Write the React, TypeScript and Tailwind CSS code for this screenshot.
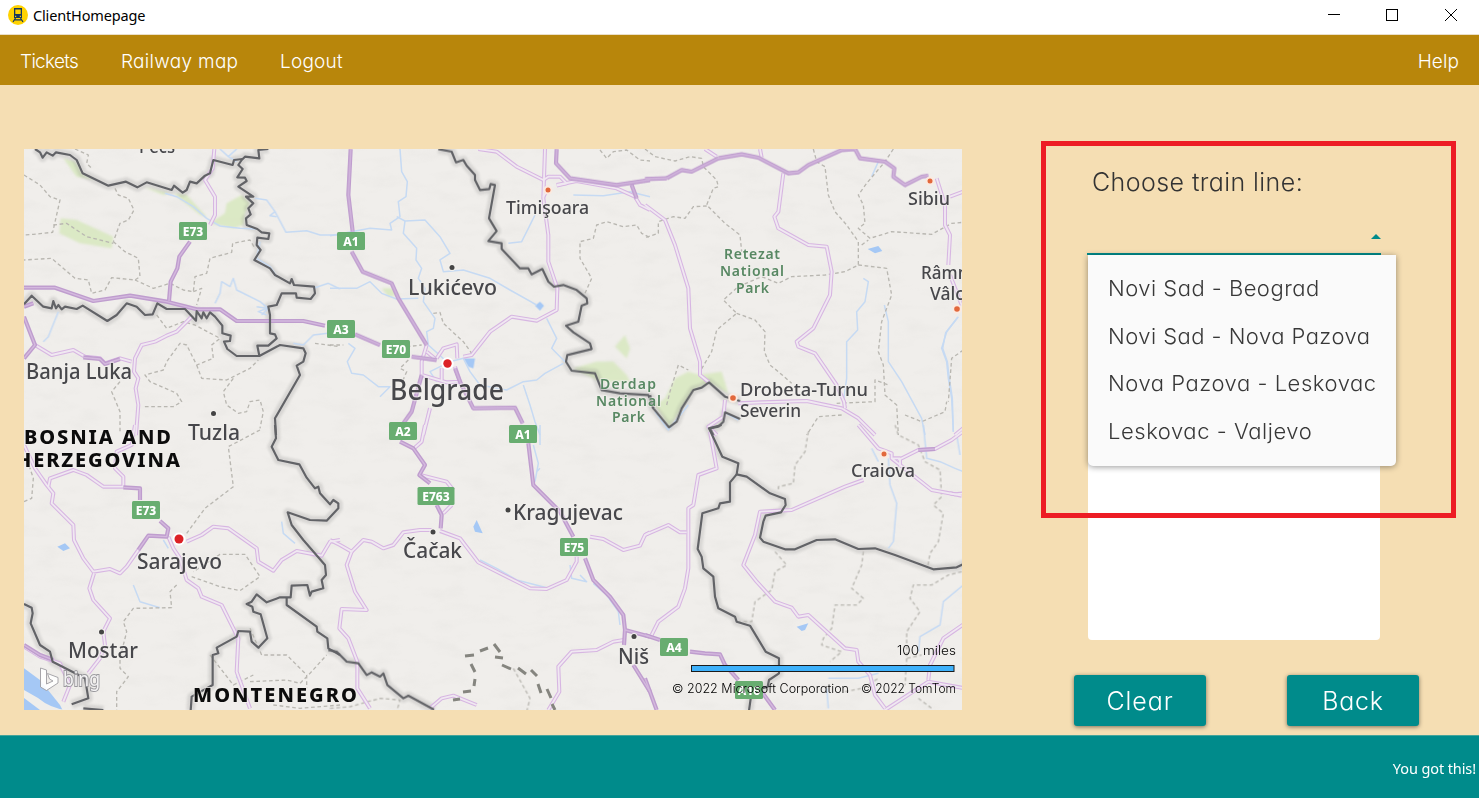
import React from "react";

type Tile = {
  x: number;
  y: number;
  parks?: string[];
  water?: string[];
  rivers?: string[];
  dashes?: string[];
  minor?: string[];
  major?: string[];
  borders?: string[];
};

// Every tile is drawn on a grid three times finer than the map's own pixels.
const tiles: Tile[] = [
  {
    x: 20,
    y: 145,
    parks: [
      "M122 220 L170 225 280 275 275 310 180 295 118 265Z",
      "M130 40 L165 50 190 90 230 105 170 95Z",
      "M620 175 L665 150 690 175 675 205 670 240 640 250 570 235 615 205Z",
      "M460 145 L500 150 560 215 540 210Z",
      "M370 125 L450 145 430 150Z",
    ],
    rivers: [
      "M435 145 L470 155 520 185 560 220 600 243 660 250 710 252",
      "M600 12 L625 35 650 12 M625 35 L650 50",
      "M705 160 L740 165 765 200 798 262 860 257 900 270 960 270",
      "M765 200 L750 212 770 215",
      "M585 475 L600 445 605 410 630 425 640 400 650 435 720 470 745 490 725 510",
      "M115 500 L95 550 85 575 70 590",
      "M720 290 L710 340 750 365 770 395 M880 430 L925 415 960 432",
      "M960 560 L880 570 850 600 820 595",
      "M710 485 L740 490 715 500 740 510",
    ],
    dashes: [
      "M12 90 L60 120 90 155 120 165 98 262 40 268 12 270",
      "M100 240 L140 235 200 275 280 295",
      "M285 130 L295 150 325 160 342 195 325 225 300 235 280 290",
      "M280 290 L315 320 355 340 360 395 345 405 275 398 255 435 215 445 205 405 165 400 95 340 12 345",
      "M345 405 L400 430 450 415 490 435 520 440 525 395 560 385 570 340 635 322 638 295 690 285 705 310",
      "M410 510 L440 550 490 530 525 540 600 580 575 600 580 640 530 660 500 600 480 595 440 650 430 675 375 690 390 710 470 745 485 770 460 785 370 785",
      "M530 660 L545 700 620 705 690 670 715 645",
      "M640 700 L610 740 620 780 655 805 680 800 690 770 720 765 730 800 720 850",
      "M165 12 L205 30 200 55 215 70",
      "M300 710 L275 740 300 800 300 860",
      "M885 595 L960 605 M520 440 L545 430 530 480",
    ],
    minor: [
      "M583 12 L578 70 555 105 585 155 585 210 570 240",
      "M45 600 L95 630 160 615 195 635 240 640 255 655 300 640 335 650",
      "M515 515 L470 560 440 572 405 590 365 600 345 640 342 680 355 700 347 730 355 780 348 870",
    ],
    major: [
      "M12 428 L105 428 220 468 330 452 440 470 530 493 600 493 650 528 850 528 915 542",
      "M510 290 L478 335 472 370 452 410 447 468",
      "M12 515 L45 600 12 640",
      "M190 637 L240 642 255 657 300 642",
      "M12 485 L40 475",
    ],
    borders: [
      "M45 12 L60 22 68 38 80 22 98 32 108 22 150 30 170 45 188 85 265 122 318 110 352 127 380 112 455 135 462 122 488 143 500 135 510 110 530 115 555 92 570 85 580 45 638 60 642 45 668 42",
      "M745 12 L715 15 718 40 675 35 665 45 655 60 668 72 652 97 675 98 680 108 655 125 700 155 678 155 700 175 685 190 692 208 678 220 680 240 712 252 725 262 748 265 745 282 712 278 710 300 722 315 703 345 750 370 765 390 810 415 815 402 822 420 882 425 885 445 872 462 830 458 828 445 785 445 770 480 745 485 750 510 750 565 765 568 770 580 745 602 712 602 718 632",
      "M12 478 L35 452 70 485 95 490 100 468 108 490 115 480 125 493 135 485 170 492 188 482 262 528 290 510 320 475 350 485 375 510 398 508 412 475 440 492 495 492 528 527 530 498 545 520 550 502 560 520 570 502 585 515 607 542 607 565 632 572 630 588 612 590 622 612 650 633 718 633 780 600 850 610 857 625 850 650 830 662 840 690 765 820 768 870",
    ],
  },
  {
    x: 330,
    y: 145,
    parks: [
      "M730 670 L800 650 850 650 890 690 900 710 810 710Z",
      "M855 605 L885 570 900 610 890 640Z",
      "M155 430 L190 430 210 450 175 455Z",
    ],
    water: ["M615 482 L630 470 642 482 630 497Z", "M400 640 L435 640 430 670 415 665Z"],
    rivers: [
      "M210 12 L215 80 232 110 228 155 205 170 210 215 180 235 185 255 120 250 0 272",
      "M200 215 L225 228 285 225 330 275 360 325 330 345 340 380 400 375 480 400 540 435 620 480",
      "M225 228 L220 265 260 310 258 345 275 370 265 400 285 430 280 470 315 520 310 550 290 560 295 600 350 650",
      "M0 430 L80 430 120 410 155 445 200 462 265 460",
      "M55 595 L75 610 52 650 65 685 100 690 145 725 180 725 150 755",
      "M360 650 L400 640 420 680 450 720 530 735 580 710 620 705 645 685 700 655",
      "M650 520 L680 580 665 610 705 650",
      "M580 720 L600 780 615 830 630 870",
      "M615 210 L595 250 575 290 535 295 M960 155 L900 140 820 152 730 150",
      "M350 655 L300 680 320 710",
    ],
    dashes: [
      "M310 505 L330 502 340 535 400 590 425 625",
      "M230 605 L275 600 M235 645 L210 670 230 680 215 715",
      "M765 445 L785 400 750 340 750 290 790 280 800 240 830 230 880 245 920 240 935 265 960 278",
      "M810 15 L830 40 850 20 890 15 930 45 960 48",
      "M0 600 L40 600",
    ],
    minor: [
      "M400 635 L425 630 480 560 545 515 620 527 680 495 682 430 655 350 655 270 640 160 645 12",
      "M445 12 L500 20 560 65 640 105 655 95 690 95 710 115 680 122 M655 130 L640 155",
      "M680 120 L740 108 860 130 915 155 930 180 960 195",
      "M290 600 L275 650 275 690 350 712 390 710 375 665",
      "M320 640 L340 610 380 598 382 640",
      "M300 790 L280 870 M335 670 L335 705 M290 620 L320 645",
    ],
    major: [
      "M62 12 L55 150 68 260",
      "M65 320 L98 380 185 415 205 460 290 600",
      "M75 568 L150 600",
      "M245 635 L320 645",
      "M275 690 L245 800 220 835",
      "M375 670 L390 710 430 790 555 788 578 835",
      "M680 12 L678 55 720 100 860 120 960 105 M905 120 L920 160",
    ],
    borders: [
      "M325 12 L365 20 378 52 400 45 410 62 435 90 435 105 450 135 478 132 482 117 495 120 477 220 500 258 475 288 515 295 515 312 570 370 595 370 605 388 637 372 655 410 672 425 700 420 740 435 770 460 772 475 755 482 745 530 708 542 730 562 780 595 785 612 712 630 708 650 725 677 795 685 815 735 870 745 955 750 970 790",
    ],
  },
  {
    x: 645,
    y: 145,
    parks: ["M30 780 L60 760 90 700 130 680 165 690 230 680 250 745 192 712 145 735 110 790 72 847Z"],
    water: ["M668 312 L700 303 712 318 690 325Z"],
    rivers: [
      "M655 400 L670 410 660 470 635 500 638 555 605 590 605 700 595 770",
      "M718 480 L730 530 730 650 770 710 830 820 840 870",
      "M235 800 L280 825 M30 800 L70 855 130 780",
      "M700 50 L680 95",
      "M940 515 L905 560 890 610 905 650 910 700 920 760 925 860",
      "M937 518 L902 563 893 610 907 650 913 700 922 760 925 860",
    ],
    dashes: [
      "M0 12 L30 35 90 48 135 35 170 40 175 65 215 105 220 125 205 130 185 180 240 235 285 270 290 320",
      "M185 183 L145 185 120 220 85 215 40 230 40 265 0 278",
      "M505 12 L515 50 540 65 550 150 570 200 605 240 640 290 640 360 600 380 540 390 440 395 400 415 350 395 280 425 235 465 275 505 215 555 200 620 165 680",
      "M275 505 L330 525 360 560 358 620 375 660 400 680 440 715",
      "M745 12 L720 50 665 115 640 150 655 180 660 235 640 250 675 280 740 260 860 268 920 235 955 232",
      "M640 360 L725 370 740 450 710 530 700 620 715 660 720 750 755 780 760 870",
      "M575 775 L690 770 690 705 730 720 M780 810 L830 830 900 800 905 770",
      "M955 615 L920 640 910 770 M590 810 L520 815 485 870 M650 300 L670 285",
      "M65 780 L75 740 100 660 130 675",
    ],
    minor: [
      "M180 12 L215 35 M345 12 L350 38",
      "M415 85 L400 200 388 215 400 250 490 300 545 305 560 380 555 450 505 550 455 590 460 605 510 625 575 720 597 770 600 790",
      "M0 180 L60 225 90 300 130 430 135 550 165 650 165 690 192 712",
      "M875 100 L900 180 900 240 915 270 910 360 M915 155 L955 140 M915 390 L950 480",
      "M280 775 L350 772 485 768 590 790 640 820 690 870",
      "M240 765 L235 815 190 845 215 870",
      "M930 870 L960 845",
    ],
    major: [
      "M0 102 L65 100 M220 40 L290 28 340 38 430 85 460 82 490 60 590 15 630 12 645 40 720 50 748 70 745 95 780 120 830 95 850 92",
      "M65 100 L110 75 140 80 220 40",
    ],
    borders: [
      "M15 750 L25 790 72 847 95 830 110 790 145 735 170 728 192 712 240 755 285 768",
      "M285 822 L240 802 235 830 220 845 195 850 205 870",
    ],
  },
  {
    x: 20,
    y: 425,
    water: [
      "M12 730 L60 765 120 840 130 860 12 860Z",
      "M112 365 L135 355 150 370 130 378Z",
    ],
    rivers: [
      "M785 290 L790 325 825 355 M340 480 L360 530 420 548",
      "M650 670 L650 760 M430 345 L445 370",
    ],
    dashes: [
      "M720 15 L625 65 640 185 555 250 500 325",
      "M470 480 L450 500 455 548 340 550 310 590 320 620 300 700 300 730 325 755 290 800 290 860",
      "M12 230 L35 220 40 160 20 100",
      "M515 455 L600 485 660 497 720 455 675 388 600 388 520 440",
      "M690 610 L725 690 800 690 860 750 860 790 M690 770 L800 765 840 775 870 745 920 690 M570 690 L640 780 700 750",
      "M760 840 L840 850 960 840",
    ],
    minor: [
      "M345 0 L335 60 290 80 285 130 310 155 310 185",
      "M12 60 L45 130 80 180 100 205 95 235 160 300 162 345 190 400 220 440 270 432 300 445 320 425 355 375",
      "M85 185 L90 160 160 135 200 150 250 185 310 185",
      "M222 445 L208 490 220 525 270 580 250 620 255 660 240 700 205 745",
      "M445 335 L460 370 480 400 500 465 535 490 545 515 605 540 640 610 655 640 650 740 690 850",
      "M500 350 L545 330 580 305 625 310 710 370 715 410 760 437 785 405 830 378 905 392 930 350 960 345",
      "M12 665 L60 695 120 715 150 780 130 830",
    ],
    major: ["M310 187 L360 190 360 225", "M355 375 L385 332 440 335 445 310 420 288", "M12 660 L60 690 100 705"],
    borders: [
      "M765 0 L768 40 755 65 775 105 838 118 860 158 885 190 895 185 900 205 930 238 940 225 955 235 955 250 920 287 870 285 803 262 815 300 850 345 915 420 918 450 905 465 910 490 875 500 870 512 862 480 815 482 812 517 780 517 740 532 710 508 695 530 680 537 697 545 700 560 722 568 742 640 715 668 695 650 690 620 655 618 650 635 590 668 595 685 578 690 578 780 515 815 512 857",
      "M800 518 L800 540 890 605 892 620 922 640 925 670 960 690",
      "M12 537 L35 548 38 565 32 595 60 660 90 680 98 710 195 760 200 790 205 820 155 838",
      "M190 850 L250 855",
    ],
  },
  {
    x: 330,
    y: 425,
    water: ["M430 305 L440 285 458 325 435 320Z"],
    rivers: [
      "M610 60 L625 115 615 170 M630 130 L620 140 M630 0 L630 60",
      "M450 405 L500 430 560 465 650 488",
      "M720 420 L725 460 770 470 750 450 M790 475 L830 510 865 560 870 600",
    ],
    dashes: ["M550 730 L600 820 590 860", "M0 850 L60 845 150 820 210 825 200 860"],
    minor: [
      "M0 345 L30 360 65 380 100 345 125 350 160 370 190 360 220 322 270 315 305 315",
      "M65 380 L50 420 75 500 110 555 35 552 28 610 55 640 82 710 82 790 120 850",
      "M330 318 L390 340 445 412 520 450 600 490 650 492 710 465 740 410 740 395",
      "M285 0 L275 50 250 72 M365 240 L340 265 M270 150 L350 170 370 195",
      "M780 335 L820 342 880 375 930 362 945 330 960 322",
      "M882 645 L850 650 800 675 725 680 685 725 688 800 655 855",
      "M300 850 L335 820 370 812 440 840",
    ],
    major: [
      "M210 50 L250 70 285 120 268 150 300 175",
      "M320 240 L335 270 332 310",
      "M595 55 L610 180 690 260 730 335",
      "M765 400 L790 465 840 515 880 570 885 615 960 635",
      "M885 615 L882 660 M910 720 L960 800",
    ],
    borders: ["M-5 675 L20 680 50 710 85 715 110 750 125 742 150 755 160 745 172 780 220 820 235 812 312 854"],
  },
  {
    x: 645,
    y: 425,
    water: ["M455 605 L490 595 480 615 470 618Z"],
    rivers: [
      "M730 100 L735 180 755 235 745 350 730 370",
      "M835 0 L845 100 885 110 930 130 955 140 M935 30 L945 90",
      "M955 480 L895 530 885 600 825 635 820 680",
      "M550 760 L640 760 700 745 M545 790 L550 850 M680 70 L700 110",
    ],
    dashes: [
      "M490 20 L480 80 450 120 445 175 400 185 400 200",
      "M750 0 L760 30 820 60 840 110 885 135 890 215 865 240 895 265 880 350 855 385 848 425",
      "M390 380 L425 420 390 440 380 495 330 530 320 590 280 590",
      "M655 380 L650 420 620 490 655 520 635 540 570 540 560 610 535 640 530 660 590 680 555 710",
      "M950 440 L910 450 860 480 805 480 795 520 825 560 785 620 785 700 830 690 M785 700 L780 780 M820 820 L860 850",
      "M600 800 L650 790 700 760",
    ],
    minor: [
      "M195 20 L215 130 160 150 145 240 130 250 130 430 120 490 100 545 40 590 20 630",
      "M640 0 L700 70 740 85 740 100 860 195 930 208 960 205",
      "M760 105 L820 75 870 72 920 45 960 15 M740 100 L765 100 765 125",
      "M655 165 L600 185 440 255 345 260 330 330 295 420 335 470 390 530 440 548 460 575 490 570 600 670 635 675 640 710 675 750 690 810 720 850",
      "M0 330 L70 300 105 322 125 322 M915 205 L950 212",
      "M850 765 L855 720 895 640 960 595",
      "M720 855 L850 770 960 790",
    ],
    major: [
      "M135 680 L180 685 225 688 240 720 280 765",
      "M0 760 L35 855 M350 800 L390 855 M0 630 L45 645",
      "M820 75 L870 72",
    ],
    borders: [
      "M230 0 L192 10 232 95 280 115 275 148 305 155 375 205 420 222 422 240 408 262 362 272 355 290 345 338 355 350 420 373 450 373 515 345 570 343 640 372 690 370 750 390 865 433 935 427 960 415",
      "M275 148 L255 172 255 230 225 235 220 250 172 265 158 372 170 395 175 430 205 455 210 515 220 550 270 575 275 590 315 602 362 680 402 700 402 745 372 765 368 785 320 800 312 857",
    ],
  },
];

type Layer = "parks" | "water" | "rivers" | "dashes" | "minor" | "major" | "borders";

function LayerPaths({ layer, ...style }: { layer: Layer } & React.SVGProps<SVGGElement>) {
  return (
    <g fill="none" strokeLinejoin="round" {...style}>
      {tiles.map((t, i) => (
        <g key={i} transform={`translate(${t.x} ${t.y}) scale(0.33333)`}>
          {(t[layer] ?? []).map((d, j) => (
            <path key={j} d={d} />
          ))}
        </g>
      ))}
    </g>
  );
}

// text, left, baseline, size, width
type Label = [string, number, number, number, number];

const cities: Label[] = [
  ["Banja Luka", 26, 379, 21, 106],
  ["Tuzla", 188, 439.5, 21, 52],
  ["Lukićevo", 408, 294.5, 21.5, 89],
  ["Timişoara", 506, 213.5, 18.5, 83],
  ["Sibiu", 908, 204.5, 18.5, 42],
  ["Drobeta-Turnu", 740, 396, 18.5, 128],
  ["Severin", 740, 417, 18.5, 61],
  ["Craiova", 851, 477, 18.5, 64],
  ["Kragujevac", 513, 520, 21.5, 110],
  ["Čačak", 403, 557.5, 21.5, 59],
  ["Niš", 618, 663.5, 22.5, 31],
  ["Sarajevo", 137, 569, 21.5, 85],
  ["Mostar", 68, 658, 21.5, 70],
];

const parkNames: Label[] = [
  ["Retezat", 724, 259, 14, 56],
  ["National", 720, 276, 14, 64],
  ["Park", 736, 293, 14, 33],
  ["Derdap", 600, 388.5, 14, 56],
  ["National", 596, 405.5, 14, 65],
  ["Park", 612, 422, 14, 33],
];

const shields: [string, number, number, number][] = [
  ["E73", 193, 231, 28],
  ["A1", 351, 241, 28],
  ["A3", 341, 329, 28],
  ["E70", 396, 349, 28],
  ["A2", 403, 431, 28],
  ["A1", 523, 434, 28],
  ["E763", 436, 496, 37],
  ["E73", 146, 510, 28],
  ["E75", 574, 547, 28],
  ["A4", 674, 647, 28],
  ["A16", 749, 690, 28],
];

function RailwayMap() {
  return (
    <svg
      viewBox="24 149 938 561"
      className="block h-[561px] w-[938px] font-['Noto_Sans','Open_Sans',sans-serif] font-normal"
      role="img"
      aria-label="Railway map"
    >
      <defs>
        <filter id="relief" x="0" y="0" width="100%" height="100%">
          <feTurbulence type="fractalNoise" baseFrequency="0.03 0.08" numOctaves="4" seed="8" />
          <feColorMatrix type="matrix" values="0 0 0 0 0.5  0 0 0 0 0.5  0 0 0 0 0.47  0.9 0 0 0 -0.42" />
        </filter>
        <filter id="soft">
          <feGaussianBlur stdDeviation="1.2" />
        </filter>
      </defs>
      <rect x="24" y="149" width="938" height="561" fill="#f0eeeb" />
      <rect x="24" y="149" width="938" height="561" filter="url(#relief)" opacity="0.2" />
      <LayerPaths layer="parks" fill="#d6e7bb" fillOpacity="0.8" filter="url(#soft)" />
      <LayerPaths layer="water" fill="#a5c8f5" />
      <path d="M24 690 L38 698 Q50 708 66 710 L40 710 24 698Z" fill="#f0eeea" />
      <g opacity="0.2" filter="url(#soft)">
        <LayerPaths layer="borders" stroke="#808080" strokeWidth="26" />
      </g>
      <LayerPaths layer="rivers" stroke="#c6daf3" strokeWidth="4.5" />
      <LayerPaths layer="dashes" stroke="#b9b7b1" strokeWidth="4" strokeDasharray="11 8" />
      <LayerPaths layer="minor" stroke="#d7b6e2" strokeWidth="12" />
      <LayerPaths layer="minor" stroke="#f0e8f1" strokeWidth="5.5" />
      <LayerPaths layer="major" stroke="#bf9dce" strokeWidth="12.5" />
      <LayerPaths layer="major" stroke="#d4b9de" strokeWidth="4" />
      <LayerPaths layer="borders" stroke="#626367" strokeWidth="6.5" />
      <path
        d="M465 656 L474 655 M480 651 L488 648 M494 644 L500 652 M495 657 L503 658 M502 665 L511 669 M518 668 L526 674 M531 670 L537 676 M538 684 L541 693 M547 689 L551 698 M552 704 L555 710 M471 664 L475 672 M475 679 L474 686 M463 692 L471 691 M453 700 L460 699"
        fill="none"
        stroke="#85857f"
        strokeWidth="3"
      />

      {/* City markers */}
      {[
        [548, 190, 2.5],
        [930, 181, 2.5],
        [733, 398, 2.8],
        [957, 309, 2.8],
        [884, 454, 2.5],
      ].map(([x, y, r]) => (
        <circle key={x} cx={x} cy={y} r={r} fill="#e2683c" stroke="#fbeae0" strokeWidth="4" paintOrder="stroke" />
      ))}
      <circle cx="447.500" cy="363.500" r="4.200" fill="#dc2226" stroke="#fff" strokeWidth="4" paintOrder="stroke" />
      <circle cx="179" cy="539" r="4.500" fill="#dc2226" stroke="#fff" strokeWidth="4" paintOrder="stroke" />
      {[
        [452, 267.5],
        [213.5, 413.5],
        [433, 532],
        [508, 510],
        [101.5, 632],
        [634, 636.5],
      ].map(([x, y]) => (
        <circle key={x} cx={x} cy={y} r="2.500" fill="#444" stroke="#f3f1ee" strokeWidth="2" paintOrder="stroke" />
      ))}

      {/* Road shields */}
      {shields.map(([name, cx, cy, w]) => (
        <g key={`${name}-${cx}`}>
          <rect x={cx - w / 2} y={cy - 9} width={w} height={18} rx="1.500" fill="#68ad70" />
          <text x={cx} y={cy + 4.5} fontSize="12" fontWeight="800" fill="#fff" textAnchor="middle">
            {name}
          </text>
        </g>
      ))}

      {/* Place names */}
      <g fill="#47474b" stroke="#f2f0ed" strokeOpacity="0.6" strokeWidth="2.500" paintOrder="stroke" strokeLinejoin="round">
        {cities.map(([t, x, y, s, w]) => (
          <text key={t} x={x} y={y} fontSize={s} textLength={w} lengthAdjust="spacingAndGlyphs" fontWeight="500">
            {t}
          </text>
        ))}
        <text x="390" y="399.500" fontSize="28" textLength="114" lengthAdjust="spacingAndGlyphs" fontWeight="500">
          Belgrade
        </text>
        <text x="139" y="152.500" fontSize="18" textLength="36" lengthAdjust="spacingAndGlyphs" fontWeight="500">
          Pecs
        </text>
        <text x="921" y="279" fontSize="18" fontWeight="500" textLength="71" lengthAdjust="spacingAndGlyphs">
          Râmnicu
        </text>
        <text x="930" y="300" fontSize="18" fontWeight="500" textLength="54" lengthAdjust="spacingAndGlyphs">
          Vâlcea
        </text>
      </g>
      <g fill="#588863" stroke="#f2f0ed" strokeOpacity="0.6" strokeWidth="2" paintOrder="stroke" fontWeight="600">
        {parkNames.map(([t, x, y, s, w]) => (
          <text key={`${t}-${x}`} x={x} y={y} fontSize={s} textLength={w}>
            {t}
          </text>
        ))}
      </g>
      <g fill="#0c0c0c" stroke="#f2f0ed" strokeOpacity="0.7" strokeWidth="2" paintOrder="stroke" fontWeight="800" fontSize="20">
        <text x="24" y="444" textLength="147">BOSNIA AND</text>
        <text x="16" y="467" textLength="164">HERZEGOVINA</text>
        <text x="193" y="702" textLength="164">MONTENEGRO</text>
      </g>

      {/* Bing mark */}
      <path
        d="M40.500 668 L46.500 670 V684 L53 681 L49.500 679 L47.500 673.500 L58 677.500 V683 L46.500 690.500 L40.500 687Z"
        fill="#fff"
        fillOpacity="0.9"
        stroke="#9d9ca0"
        strokeWidth="0.900"
      />
      <text
        x="63"
        y="686"
        fontSize="19"
        fill="#f4f3f4"
        stroke="#9b9a9e"
        strokeWidth="2"
        paintOrder="stroke"
        textLength="37"
        lengthAdjust="spacingAndGlyphs"
      >
        bing
      </text>

      {/* Scale bar and copyright */}
      <rect x="691.500" y="665.500" width="262.500" height="6" fill="#3eb1fb" stroke="#1b1b1b" />
      <g className="font-['Inter',sans-serif] [font-feature-settings:'cv11'_1]" fill="#000" fontSize="12.500" fontWeight="350">
        <text x="897" y="655" textLength="59" lengthAdjust="spacingAndGlyphs">100 miles</text>
        <text x="672" y="693" textLength="177" lengthAdjust="spacingAndGlyphs">© 2022 Microsoft Corporation</text>
        <text x="861" y="693" textLength="95" lengthAdjust="spacingAndGlyphs">© 2022 TomTom</text>
      </g>
    </svg>
  );
}

function TrainIcon() {
  return (
    <svg viewBox="0 0 20 20" className="size-5">
      <circle cx="10" cy="10" r="10" fill="#ffd200" />
      <path fill="#17365d" fillRule="evenodd" d="M6 3 H14 V13 H6Z M7.300 4.500 V9 H12.700 V4.500Z" />
      <path stroke="#17365d" strokeWidth="1.200" d="M7.500 13 L5 17 M12.500 13 L15 17 M6.500 14.800 H13.500" />
      <path fill="#ffd200" d="M7 10.700h1.200v1.200H7zM11.800 10.700H13v1.200h-1.200z" />
    </svg>
  );
}

function TitleBar() {
  return (
    <header className="flex h-[35px] items-start border-b border-[#eadfc8] bg-white">
      <div className="flex items-start gap-[5px] pt-[5px] pl-2">
        <TrainIcon />
        <span className="font-['Noto_Sans','Open_Sans',sans-serif] text-[14.500px] leading-5 font-normal tracking-[-0.150px] text-black">
          ClientHomepage
        </span>
      </div>
      <svg viewBox="0 0 151 34" className="ml-auto h-[34px] w-[151px]" fill="none" stroke="#000" shapeRendering="crispEdges">
        <path d="M0 14.500 H12" />
        <rect x="58.500" y="9.500" width="11" height="11" />
        <path d="M117 9 L129 21 M129 9 L117 21" shapeRendering="auto" />
      </svg>
    </header>
  );
}

const lines = [
  { name: "Novi Sad - Beograd", spacing: "tracking-[0.480px]" },
  { name: "Novi Sad - Nova Pazova", spacing: "tracking-[0.460px]" },
  { name: "Nova Pazova - Leskovac", spacing: "tracking-[0.540px]" },
  { name: "Leskovac - Valjevo", spacing: "tracking-[0.550px]" },
];

export default function App() {
  return (
    <div className="relative flex h-[798px] w-[1479px] flex-col overflow-hidden bg-[#f5deb3] font-['Inter',sans-serif] font-light [font-feature-settings:'cv11'_1]">
      <TitleBar />
      <nav className="flex h-[50px] items-center bg-[#b8860b] px-5 pt-1 text-[19px] font-[350] text-white">
        <a className="w-[101px] tracking-[-0.700px]">Tickets</a>
        <a className="w-[159px] tracking-[0.300px]">Railway map</a>
        <a className="tracking-[0.200px]">Logout</a>
        <a className="ml-auto tracking-[0.100px]">Help</a>
      </nav>

      <main className="flex h-[650px]">
        <div className="pt-16 pl-6">
          <RailwayMap />
        </div>

        <section className="flex flex-1 flex-col pl-28">
          <h1 className="pt-[79px] pl-[18px] text-[25px] leading-9 font-light tracking-[0.420px] text-[#333]">
            Choose train line:
          </h1>
          <div className="relative ml-[13px] h-[55px] w-[294px] border-b-2 border-[#008b8b]">
            <svg viewBox="0 0 10 5" className="mt-[34px] ml-auto h-[5px] w-[10px]">
              <path d="M5 0 L10 5 H0Z" fill="#008b8b" />
            </svg>
            <ul className="absolute top-[55px] left-px z-10 h-[211px] w-[308px] rounded-b-[5px] bg-[#fafafa] pt-2.5 pl-5 text-[22px] leading-[47.700px] whitespace-nowrap text-[#383838] shadow-[0_1px_6px_rgba(0,0,0,0.4)]">
              {lines.map(({ name, spacing }) => (
                <li key={name}>
                  <span className={spacing}>{name}</span>
                </li>
              ))}
            </ul>
          </div>
          <div className="ml-3.5 h-[385px] w-[292px] rounded-[4px] bg-white" />
          <div className="flex gap-[81px] pt-[35px] text-[25px] text-white">
            <button className="h-[51px] w-[132px] rounded-[3px] bg-[#008b8b] pt-0.5 tracking-[0.900px] shadow-[0_1px_4px_rgba(0,0,0,0.5)]">
              Clear
            </button>
            <button className="h-[51px] w-[132px] rounded-[3px] bg-[#008b8b] pt-0.5 tracking-[0.700px] shadow-[0_1px_4px_rgba(0,0,0,0.5)]">
              Back
            </button>
          </div>
        </section>
      </main>

      <footer className="flex h-[63px] items-center justify-end border-t border-[#45a49a] bg-[#008b8b] pt-1 pr-[3px] font-['Noto_Sans','Open_Sans',sans-serif] text-[14.500px] font-normal tracking-[-0.100px] text-white">
        You got this!
      </footer>

      <div className="pointer-events-none absolute top-[141px] left-[1041px] z-20 h-[377px] w-[415px] border-5 border-[#ed1c24]" />
    </div>
  );
}
